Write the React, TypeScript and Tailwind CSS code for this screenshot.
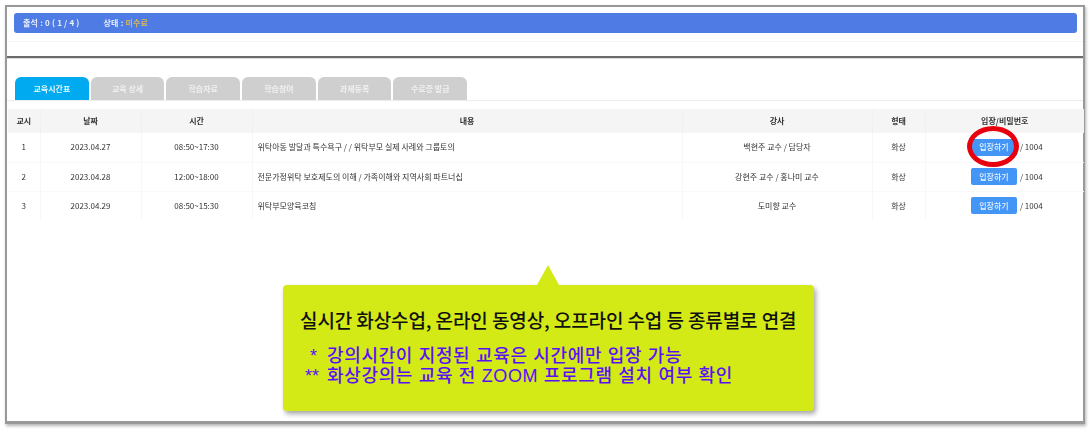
const rows = [
  { no: "1", date: "2023.04.27", time: "08:50~17:30", title: "위탁아동 발달과 특수욕구 / / 위탁부모 실제 사례와 그룹토의", teacher: "백현주 교수 / 담당자" },
  { no: "2", date: "2023.04.28", time: "12:00~18:00", title: "전문가정위탁 보호제도의 이해 / 가족이해와 지역사회 파트너십", teacher: "강현주 교수 / 홍나미 교수" },
  { no: "3", date: "2023.04.29", time: "08:50~15:30", title: "위탁부모양육코칭", teacher: "도미향 교수" },
];

const tabs = ["교육시간표", "교육 상세", "학습자료", "학습참여", "과제등록", "수료증 발급"];

const headers = ["교시", "날짜", "시간", "내용", "강사", "형태", "입장/비밀번호"];

export default function App() {
  return (
    <div className="h-[429px] w-[1091px] overflow-hidden bg-white px-[5px] pt-[5px] font-['Noto_Sans_CJK_KR',sans-serif]">
      <div className="relative h-[419px] w-[1080px] border-2 border-b-[3px] border-[#999999] bg-white shadow-[1px_2px_3px_rgba(0,0,0,0.3)]">
        <div className="blur-[0.4px]">
          {/* status bar */}
          <div className="ml-px h-[35px] border-b border-[#f4f4f4] pl-[6px] pr-[6px] pt-[6px]">
            <div className="flex h-[20px] items-center gap-[24px] rounded-[3px] bg-[#4f7be4] pl-[9px] text-[8px] font-bold tracking-[0.2px] text-[#e8eefc]">
              <span>출석 : 0 ( 1 / 4 )</span>
              <span>
                상태 : <span className="text-[#e0b84a]">미수료</span>
              </span>
            </div>
          </div>

          <div className="mt-[14px] h-[3px] border-t-2 border-b border-t-[#6b6b6b] border-b-[#dddddd]" />

          {/* tabs */}
          <div className="mt-[18px] flex h-[24px] gap-[2px] border-b border-[#ececec] pl-[8px]">
            {tabs.map((tab, i) => (
              <div
                key={tab}
                className={`flex h-[23px] w-[73.7px] items-center justify-center rounded-t-[6px] text-[8px] font-bold ${
                  i === 0 ? "bg-[#00aaf0] text-[#e6f6fe]" : "bg-[#cfcfcf] text-[#f0f0f0]"
                }`}
              >
                {tab}
              </div>
            ))}
          </div>

          {/* schedule table */}
          <table className="ml-px mt-[8px] w-[1076px] table-fixed border-collapse text-[8px] text-[#333333]">
            <colgroup>
              <col className="w-[32px]" />
              <col className="w-[101px]" />
              <col className="w-[111px]" />
              <col className="w-[430px]" />
              <col className="w-[190px]" />
              <col className="w-[53px]" />
              <col />
            </colgroup>
            <thead>
              <tr className="h-[24px] bg-[#f5f5f5]">
                {headers.map((h) => (
                  <th key={h} className="border-r border-[#f0f0f0] font-bold text-[#333333] last:border-r-0">
                    {h}
                  </th>
                ))}
              </tr>
            </thead>
            <tbody>
              {rows.map((row) => (
                <tr key={row.no} className="h-[29px] border-b border-[#f8f9fa] last:border-b-0">
                  <td className="border-r border-[#f6f7f9] text-center">{row.no}</td>
                  <td className="border-r border-[#f6f7f9] text-center">{row.date}</td>
                  <td className="border-r border-[#f6f7f9] text-center">{row.time}</td>
                  <td className="border-r border-[#f6f7f9] pl-[5px]">{row.title}</td>
                  <td className="border-r border-[#f6f7f9] text-center">{row.teacher}</td>
                  <td className="border-r border-[#f6f7f9] text-center">화상</td>
                  <td>
                    <div className="flex items-center justify-center gap-[3px] pl-[4px]">
                      <span className="flex h-[17px] w-[46px] items-center justify-center rounded-[2px] bg-[#4496f6] font-medium text-[#e8f2fe]">
                        입장하기
                      </span>
                      <span>/ 1004</span>
                    </div>
                  </td>
                </tr>
              ))}
            </tbody>
          </table>
        </div>

        {/* red highlight around the first button */}
        <div className="absolute left-[960px] top-[119px] h-[41px] w-[52px] rounded-[50%] border-[5px] border-[#e8000f]" />

        {/* callout */}
        <div className="absolute left-[276px] top-[278px] h-[126px] w-[531px] rounded-[4px] bg-[#d3ea17] pl-[17px] pt-[21px] shadow-[2px_3px_5px_rgba(0,0,0,0.35)]">
          <div className="absolute left-[254px] top-[-20px] h-0 w-0 border-x-[11px] border-b-[20px] border-x-transparent border-b-[#d3ea17]" />
          <p className="whitespace-nowrap text-[19px] font-medium leading-[28px] tracking-[-0.1px] text-[#111111]">
            실시간 화상수업, 온라인 동영상, 오프라인 수업 등 종류별로 연결
          </p>
          <div className="mt-[12px] font-['Liberation_Sans','Noto_Sans_CJK_KR',sans-serif] text-[18px] font-medium leading-[20px] tracking-[0.65px] text-[#5a10f5]">
            <p className="flex whitespace-nowrap">
              <span className="w-[27px] pl-[10px]">*</span>
              <span>강의시간이 지정된 교육은 시간에만 입장 가능</span>
            </p>
            <p className="flex whitespace-nowrap">
              <span className="w-[27px] pl-[5px] tracking-normal">**</span>
              <span>화상강의는 교육 전 ZOOM 프로그램 설치 여부 확인</span>
            </p>
          </div>
        </div>
      </div>
    </div>
  );
}
